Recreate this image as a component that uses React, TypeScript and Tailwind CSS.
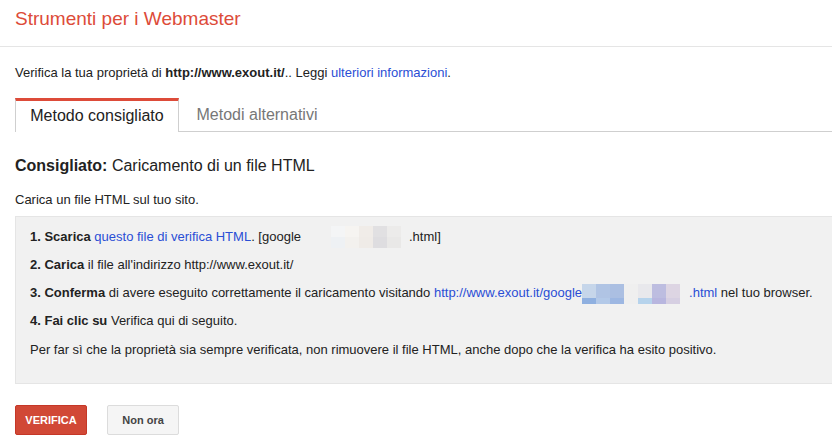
const blurA = [
  ["#f4f5f6", "#eef1f4"],
  ["#f6f4f1", "#f3f1ee"],
  ["#f0ece8", "#efebe7"],
  ["#e1e0e2", "#dedde0"],
  ["#ecebea", "#e9e8e7"],
];
const blurB = [
  ["#c6d6ea", "#8fb0e0"],
  ["#b0c4e4", "#b3c9e8"],
  ["#abbfe2", "#9db7e2"],
  ["#efefef", "#efefef"],
  ["#e8e8ec", "#b6d3ec"],
  ["#bdbde0", "#b8b6df"],
  ["#ddd5e3", "#d6cfe2"],
];

// pixelated block standing in for the blurred file name
function Blur({ cells, w, top, bottom }: { cells: string[][]; w: number; top: number; bottom: number }) {
  return (
    <span className="inline-flex">
      {cells.map((c, i) => (
        <span key={i} className="inline-flex flex-col" style={{ width: w }}>
          <span style={{ height: top, background: c[0] }} />
          <span style={{ height: bottom, background: c[1] }} />
        </span>
      ))}
    </span>
  );
}

export default function App() {
  return (
    <div className="w-[832px] h-[448px] overflow-hidden bg-white text-[#222] font-['Liberation_Sans',Arial,sans-serif]">
      <div className="h-[47px] border-b border-[#e5e5e5] px-[15px] pt-[7px]">
        <h1 className="text-[19px] text-[#dd4b39] leading-[24px]">Strumenti per i Webmaster</h1>
      </div>

      <div className="pl-[15px]">
        <p className="text-[13px] mt-[18px] leading-[16px]">
          Verifica la tua proprietà di <b>http://www.exout.it/</b>.. Leggi{" "}
          <a className="text-[#2a4ed5]">ulteriori informazioni</a>.
        </p>

        <div className="mt-[17px] flex border-b border-[#cfcfcf] h-[34px]">
          <div className="w-[164px] border-t-[3px] border-[#dd4b39] border-l border-r border-l-[#cfcfcf] border-r-[#cfcfcf] bg-white -mb-px h-[34px] flex items-center justify-center text-[16px] text-[#222] pb-[2px]">
            Metodo consigliato
          </div>
          <div className="w-[156px] flex items-center justify-center text-[16px] text-[#777] pt-[1px]">
            Metodi alternativi
          </div>
        </div>

        <h2 className="mt-[24px] text-[16px] leading-[20px]">
          <b>Consigliato:</b> Caricamento di un file HTML
        </h2>

        <p className="mt-[16px] text-[13px] leading-[16px]">Carica un file HTML sul tuo sito.</p>

        <div className="mt-[8px] h-[168px] bg-[#f1f1f1] border border-[#e5e5e5] border-r-0 pl-[14px] pt-[12px] text-[13px] leading-[16px] flex flex-col gap-[12px]">
          <div className="flex items-center h-[16px]">
            <b>1. Scarica</b>&nbsp;<a className="text-[#2a4ed5]">questo file di verifica HTML</a>. [google
            <span className="ml-[30px] flex"><Blur cells={blurA} w={14} top={11} bottom={11} /></span>
            <span className="ml-[8px]">.html]</span>
          </div>
          <div className="h-[16px]">
            <b>2. Carica</b> il file all'indirizzo http://www.exout.it/
          </div>
          <div className="flex items-center h-[16px]">
            <b>3. Conferma</b>&nbsp;di avere eseguito correttamente il caricamento visitando&nbsp;
            <a className="text-[#2a4ed5] flex items-center">
              http://www.exout.it/google
              <span className="flex translate-y-[1px]"><Blur cells={blurB} w={14} top={14} bottom={6} /></span>
              <span className="ml-[9px]">.html</span>
            </a>
            &nbsp;nel tuo browser.
          </div>
          <div className="h-[16px]">
            <b>4. Fai clic su</b> Verifica qui di seguito.
          </div>
          <div className="mt-[1px] h-[16px]">
            Per far sì che la proprietà sia sempre verificata, non rimuovere il file HTML, anche dopo che la verifica ha esito positivo.
          </div>
        </div>

        <div className="mt-[21px] flex gap-[20px]">
          <button className="h-[30px] w-[72px] rounded-[2px] bg-[#d14836] border border-[#c53727] text-white text-[11px] font-bold">
            VERIFICA
          </button>
          <button className="h-[30px] w-[72px] rounded-[2px] bg-[#f5f5f5] border border-[#dcdcdc] text-[#444] text-[11px] font-bold">
            Non ora
          </button>
        </div>
      </div>
    </div>
  );
}
